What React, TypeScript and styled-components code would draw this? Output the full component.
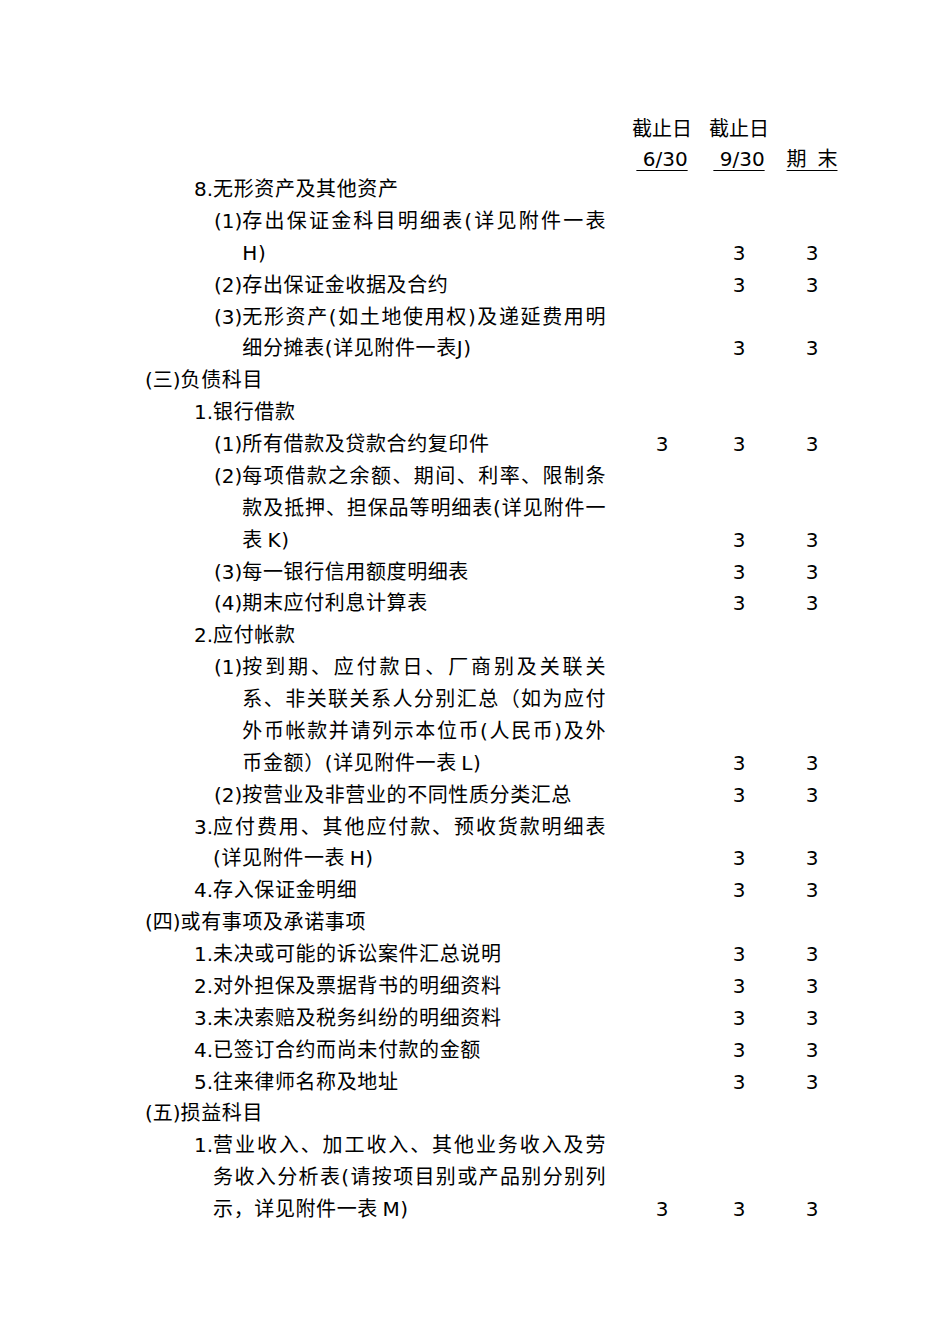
import * as React from 'react';
import styled, { createGlobalStyle } from 'styled-components';

const GlobalStyle = createGlobalStyle`
   html, body {
      margin: 0;
      padding: 0;
      background: #ffffff;
   }
   body {
      font-family: 'DejaVu Sans', 'Noto Sans CJK SC', sans-serif;
      font-size: 20px;
      color: #000000;
   }
`;

type Level = 0 | 1 | 2;

interface Item {
   level: Level;
   label: string;
   lines: string[];
   marks?: [boolean, boolean, boolean];
}

const ALL: [boolean, boolean, boolean] = [true, true, true];
const TWO: [boolean, boolean, boolean] = [false, true, true];

// thin space between 表 and the latin letter, as in the source
const T = '\u2009';

const items: Item[] = [
   { level: 1, label: '8.', lines: ['无形资产及其他资产'] },
   { level: 2, label: '(1)', lines: ['存出保证金科目明细表(详见附件一表', 'H)'], marks: TWO },
   { level: 2, label: '(2)', lines: ['存出保证金收据及合约'], marks: TWO },
   {
      level: 2,
      label: '(3)',
      lines: ['无形资产(如土地使用权)及递延费用明', '细分摊表(详见附件一表J)'],
      marks: TWO,
   },
   { level: 0, label: '(三)', lines: ['负债科目'] },
   { level: 1, label: '1.', lines: ['银行借款'] },
   { level: 2, label: '(1)', lines: ['所有借款及贷款合约复印件'], marks: ALL },
   {
      level: 2,
      label: '(2)',
      lines: ['每项借款之余额、期间、利率、限制条', '款及抵押、担保品等明细表(详见附件一', `表${T}K)`],
      marks: TWO,
   },
   { level: 2, label: '(3)', lines: ['每一银行信用额度明细表'], marks: TWO },
   { level: 2, label: '(4)', lines: ['期末应付利息计算表'], marks: TWO },
   { level: 1, label: '2.', lines: ['应付帐款'] },
   {
      level: 2,
      label: '(1)',
      lines: [
         '按到期、应付款日、厂商别及关联关',
         '系、非关联关系人分别汇总（如为应付',
         '外币帐款并请列示本位币(人民币)及外',
         `币金额）(详见附件一表${T}L)`,
      ],
      marks: TWO,
   },
   { level: 2, label: '(2)', lines: ['按营业及非营业的不同性质分类汇总'], marks: TWO },
   {
      level: 1,
      label: '3.',
      lines: ['应付费用、其他应付款、预收货款明细表', `(详见附件一表${T}H)`],
      marks: TWO,
   },
   { level: 1, label: '4.', lines: ['存入保证金明细'], marks: TWO },
   { level: 0, label: '(四)', lines: ['或有事项及承诺事项'] },
   { level: 1, label: '1.', lines: ['未决或可能的诉讼案件汇总说明'], marks: TWO },
   { level: 1, label: '2.', lines: ['对外担保及票据背书的明细资料'], marks: TWO },
   { level: 1, label: '3.', lines: ['未决索赔及税务纠纷的明细资料'], marks: TWO },
   { level: 1, label: '4.', lines: ['已签订合约而尚未付款的金额'], marks: TWO },
   { level: 1, label: '5.', lines: ['往来律师名称及地址'], marks: TWO },
   { level: 0, label: '(五)', lines: ['损益科目'] },
   {
      level: 1,
      label: '1.',
      lines: [
         '营业收入、加工收入、其他业务收入及劳',
         '务收入分析表(请按项目别或产品别分别列',
         `示，详见附件一表${T}M)`,
      ],
      marks: ALL,
   },
];

const Page = styled.div`
   width: 950px;
   min-height: 1344px;
   box-sizing: border-box;
   padding: 114px 0 0 145px;
   background: #ffffff;
`;

const Row = styled.div<{ $head?: boolean }>`
   display: grid;
   grid-template-columns: 479px 76px 78px 68px;
   align-items: end;
   line-height: ${(p) => (p.$head ? '30px' : '31.875px')};
`;

const Desc = styled.div<{ $level: Level }>`
   display: flex;
   padding-left: ${(p) => (p.$level === 0 ? 0 : p.$level === 1 ? 49 : 69)}px;
   padding-right: 18px;
`;

const Label = styled.span`
   flex: none;
   white-space: pre;
`;

const Body = styled.div`
   flex: 1;
   min-width: 0;
   letter-spacing: 0.6px;
`;

const Line = styled.div<{ $justify: boolean }>`
   white-space: nowrap;
   text-align: ${(p) => (p.$justify ? 'justify' : 'left')};
   text-align-last: ${(p) => (p.$justify ? 'justify' : 'left')};
`;

const Cell = styled.div`
   text-align: center;
   white-space: pre;
`;

const Underlined = styled.span<{ $wide?: boolean }>`
   text-decoration: underline;
   text-decoration-thickness: 1px;
   text-underline-offset: 4px;
   white-space: pre;
   word-spacing: ${(p) => (p.$wide ? '4.6px' : '0')};
`;

function Entry({ item }: { item: Item }) {
   const marks = item.marks ?? [false, false, false];
   return (
      <Row>
         <Desc $level={item.level}>
            <Label>{item.label}</Label>
            <Body>
               {item.lines.map((line, i) => (
                  <Line key={i} $justify={i < item.lines.length - 1}>
                     {line}
                  </Line>
               ))}
            </Body>
         </Desc>
         {marks.map((m, i) => (
            <Cell key={i}>{m ? '3' : ''}</Cell>
         ))}
      </Row>
   );
}

export default function App() {
   return (
      <>
         <GlobalStyle />
         <Page>
            <Row $head>
               <div />
               <Cell>截止日</Cell>
               <Cell>截止日</Cell>
               <Cell />
            </Row>
            <Row $head>
               <div />
               <Cell>
                  <Underlined> 6/30</Underlined>
               </Cell>
               <Cell>
                  <Underlined> 9/30</Underlined>
               </Cell>
               <Cell>
                  <Underlined $wide>期 末</Underlined>
               </Cell>
            </Row>
            {items.map((item, i) => (
               <Entry key={i} item={item} />
            ))}
         </Page>
      </>
   );
}
